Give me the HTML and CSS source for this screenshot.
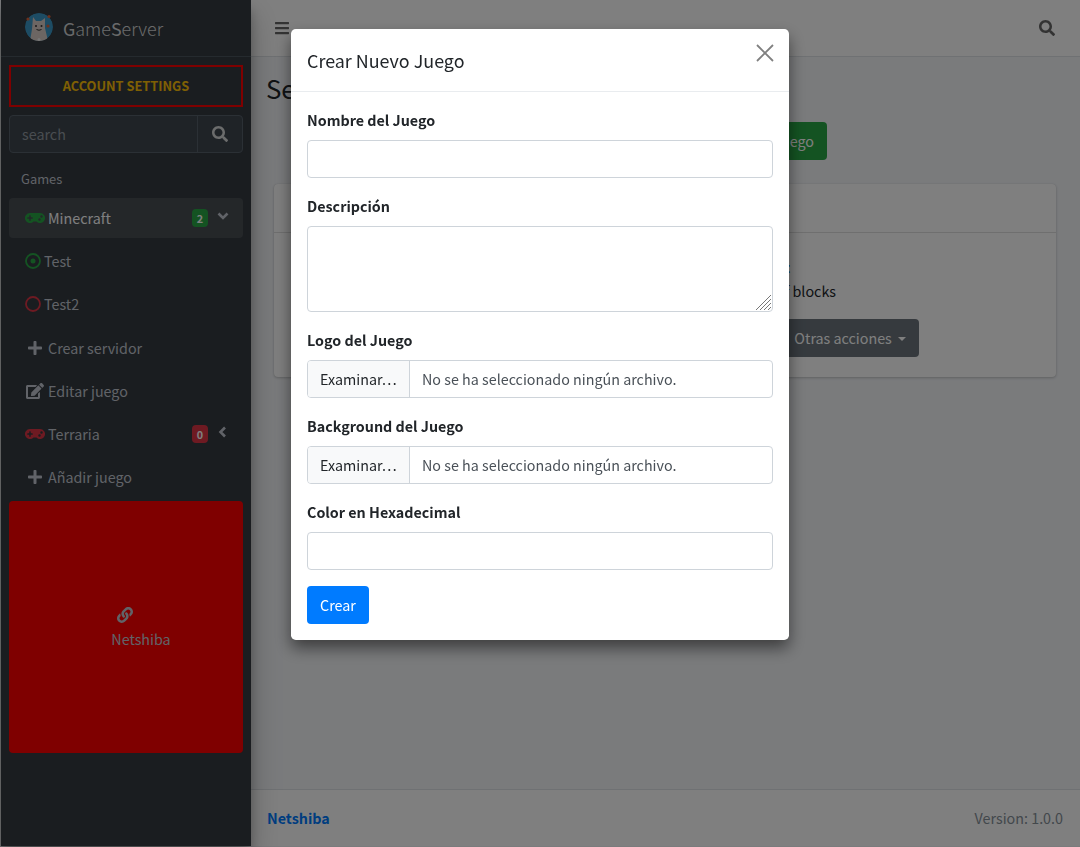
FILE: index.html
```html
<!DOCTYPE html>
<html lang="es">
<head>
    <meta charset="UTF-8">
    <title>GameServer</title>
    <link rel="stylesheet" href="styles.css">
</head>
<body>
    <svg class="sprite" xmlns="http://www.w3.org/2000/svg">
        <symbol id="i-gamepad" viewBox="0 0 640 512"><path d="M480.07 96H160a160 160 0 1 0 114.24 272h91.52A160 160 0 1 0 480.07 96zM248 268a12 12 0 0 1-12 12h-52v52a12 12 0 0 1-12 12h-24a12 12 0 0 1-12-12v-52H84a12 12 0 0 1-12-12v-24a12 12 0 0 1 12-12h52v-52a12 12 0 0 1 12-12h24a12 12 0 0 1 12 12v52h52a12 12 0 0 1 12 12zm216 76a40 40 0 1 1 40-40 40 40 0 0 1-40 40zm64-96a40 40 0 1 1 40-40 40 40 0 0 1-40 40z"/></symbol>
        <symbol id="i-search" viewBox="0 0 512 512"><path d="M505 442.7L405.3 343c-4.5-4.5-10.6-7-17-7H372c27.6-35.3 44-79.7 44-128C416 93.1 322.9 0 208 0S0 93.1 0 208s93.1 208 208 208c48.3 0 92.7-16.4 128-44v16.3c0 6.4 2.5 12.5 7 17l99.7 99.7c9.4 9.4 24.6 9.4 33.9 0l28.3-28.3c9.4-9.4 9.4-24.6.1-34zM208 336c-70.7 0-128-57.2-128-128 0-70.7 57.2-128 128-128 70.7 0 128 57.2 128 128 0 70.7-57.2 128-128 128z"/></symbol>
        <symbol id="i-plus" viewBox="0 0 448 512"><path d="M416 208H272V64c0-17.67-14.33-32-32-32h-32c-17.67 0-32 14.33-32 32v144H32c-17.67 0-32 14.33-32 32v32c0 17.67 14.33 32 32 32h144v144c0 17.67 14.33 32 32 32h32c17.67 0 32-14.33 32-32V304h144c17.67 0 32-14.33 32-32v-32c0-17.67-14.33-32-32-32z"/></symbol>
        <symbol id="i-edit" viewBox="0 0 576 512"><path d="M402.6 83.2l90.2 90.2c3.8 3.8 3.8 10 0 13.8L274.4 405.6l-92.8 10.3c-12.4 1.4-22.9-9.1-21.5-21.5l10.3-92.8L388.8 83.2c3.8-3.8 10-3.8 13.8 0zm162-22.9l-48.8-48.8c-15.2-15.2-39.9-15.2-55.2 0l-35.4 35.4c-3.8 3.8-3.8 10 0 13.8l90.2 90.2c3.8 3.8 10 3.8 13.8 0l35.4-35.4c15.2-15.3 15.2-40 0-55.2zM384 346.2V448H64V128h229.8c3.2 0 6.2-1.3 8.5-3.5l40-40c7.6-7.6 2.2-20.5-8.5-20.5H48C21.5 64 0 85.5 0 112v352c0 26.5 21.5 48 48 48h352c26.5 0 48-21.5 48-48V306.2c0-10.7-12.9-16-20.5-8.5l-40 40c-2.2 2.3-3.5 5.3-3.5 8.5z"/></symbol>
        <symbol id="i-link" viewBox="0 0 512 512"><path d="M326.612 185.391c59.747 59.809 58.927 155.698.36 214.59-.11.12-.24.25-.36.37l-67.2 67.2c-59.27 59.27-155.699 59.262-214.96 0-59.27-59.26-59.27-155.7 0-214.96l37.106-37.106c9.84-9.84 26.786-3.3 27.294 10.606.648 17.722 3.826 35.527 9.69 52.721 1.986 5.822.567 12.262-3.783 16.612l-13.087 13.087c-28.026 28.026-28.905 73.66-1.155 101.96 28.024 28.579 74.086 28.749 102.325.51l67.2-67.19c28.191-28.191 28.073-73.757 0-101.83-3.701-3.694-7.429-6.564-10.341-8.569a16.037 16.037 0 0 1-6.947-12.606c-.396-10.567 3.348-21.456 11.698-29.806l21.054-21.055c5.521-5.521 14.182-6.199 20.584-1.731a152.482 152.482 0 0 1 20.522 17.197zM467.547 44.449c-59.261-59.262-155.69-59.27-214.96 0l-67.2 67.2c-.12.12-.25.25-.36.37-58.566 58.892-59.387 154.781.36 214.59a152.454 152.454 0 0 0 20.521 17.196c6.402 4.468 15.064 3.789 20.584-1.731l21.054-21.055c8.35-8.35 12.094-19.239 11.698-29.806a16.037 16.037 0 0 0-6.947-12.606c-2.912-2.005-6.64-4.875-10.341-8.569-28.073-28.073-28.191-73.639 0-101.83l67.2-67.19c28.239-28.239 74.3-28.069 102.325.51 27.75 28.3 26.872 73.934-1.155 101.96l-13.087 13.087c-4.35 4.35-5.769 10.79-3.783 16.612 5.864 17.194 9.042 34.999 9.69 52.721.509 13.906 17.454 20.446 27.294 10.606l37.106-37.106c59.271-59.259 59.271-155.699.001-214.959z"/></symbol>
        <symbol id="i-bars" viewBox="0 0 448 512"><path d="M16 132h416c8.837 0 16-7.163 16-16V76c0-8.837-7.163-16-16-16H16C7.163 60 0 67.163 0 76v40c0 8.837 7.163 16 16 16zm0 160h416c8.837 0 16-7.163 16-16v-40c0-8.837-7.163-16-16-16H16c-8.837 0-16 7.163-16 16v40c0 8.837 7.163 16 16 16zm0 160h416c8.837 0 16-7.163 16-16v-40c0-8.837-7.163-16-16-16H16c-8.837 0-16 7.163-16 16v40c0 8.837 7.163 16 16 16z"/></symbol>
    </svg>

    <div class="wrapper">
        <aside class="sidebar">
            <a class="brand" href="#">
                <svg class="brand-logo" viewBox="0 0 28 28">
                    <clipPath id="logo-clip"><circle cx="14" cy="14" r="14"/></clipPath>
                    <g clip-path="url(#logo-clip)">
                        <circle cx="14" cy="14" r="14" fill="#3a98c8"/>
                        <path d="M8 4l3 4h5l4-3 0 10 3 13H5l2-12z" fill="#d8ccc6"/>
                        <circle cx="11" cy="13" r="1" fill="#333"/>
                        <circle cx="16.500" cy="13" r="1" fill="#333"/>
                        <path d="M11.500 16.500q2.500 1.500 5 0" stroke="#333" fill="none"/>
                    </g>
                    <circle cx="3" cy="6" r="1.600" fill="#d8623a"/>
                    <circle cx="24" cy="3.500" r="1.600" fill="#d8623a"/>
                    <circle cx="23" cy="13" r="1.600" fill="#d8623a"/>
                    <circle cx="14" cy="26.500" r="1.500" fill="#eee"/>
                </svg>
                <span class="brand-text"><b>G</b>ame<b>S</b>erver</span>
            </a>

            <a class="account" href="#">ACCOUNT SETTINGS</a>

            <div class="side-search">
                <span class="side-search-input">search</span>
                <span class="side-search-btn"><svg class="ico"><use href="#i-search"/></svg></span>
            </div>

            <div class="nav-header">Games</div>
            <ul class="nav-list">
                <li class="nav-item active">
                    <svg class="ico-pad green"><use href="#i-gamepad"/></svg>
                    <span>Minecraft</span>
                    <span class="badge bg-green">2</span>
                    <svg class="chev" viewBox="0 0 12 12"><path d="M1.500 3.500L6 8l4.500-4.500"/></svg>
                </li>
                <li class="nav-item sub">
                    <svg class="ring green" viewBox="0 0 16 16"><circle cx="8" cy="8" r="7"/><circle class="dot" cx="8" cy="8" r="2.500"/></svg>
                    <span>Test</span>
                </li>
                <li class="nav-item sub">
                    <svg class="ring red" viewBox="0 0 16 16"><circle cx="8" cy="8" r="7"/></svg>
                    <span>Test2</span>
                </li>
                <li class="nav-item">
                    <svg class="ico-slot"><use href="#i-plus"/></svg>
                    <span>Crear servidor</span>
                </li>
                <li class="nav-item">
                    <svg class="ico-slot"><use href="#i-edit"/></svg>
                    <span>Editar juego</span>
                </li>
                <li class="nav-item">
                    <svg class="ico-pad red"><use href="#i-gamepad"/></svg>
                    <span>Terraria</span>
                    <span class="badge bg-red">0</span>
                    <svg class="chev" viewBox="0 0 12 12"><path d="M8 1.500L3.500 6 8 10.500"/></svg>
                </li>
                <li class="nav-item">
                    <svg class="ico-slot"><use href="#i-plus"/></svg>
                    <span>Añadir juego</span>
                </li>
            </ul>

            <a class="promo" href="#">
                <svg class="promo-icon"><use href="#i-link"/></svg>
                <span class="promo-text">Netshiba</span>
            </a>
        </aside>

        <div class="main">
            <nav class="topbar">
                <svg class="top-ico"><use href="#i-bars"/></svg>
                <svg class="top-ico"><use href="#i-search"/></svg>
            </nav>

            <section class="content">
                <h1 class="page-title">Servidores</h1>
                <div class="actions">
                    <a class="btn btn-green" href="#">Crear nuevo juego</a>
                </div>
                <div class="card">
                    <div class="card-header"></div>
                    <div class="card-body">
                        <a class="card-link" href="#">Minecraft</a>
                        <p class="card-text">A sandbox game made up of blocks</p>
                        <div class="card-actions">
                            <a class="btn btn-grey" href="#">Otras acciones <i class="caret"></i></a>
                        </div>
                    </div>
                </div>
            </section>

            <footer class="footer">
                <a class="footer-link" href="#">Netshiba</a>
                <span class="footer-version">Version: 1.0.0</span>
            </footer>
        </div>
    </div>

    <div class="backdrop"></div>

    <div class="modal">
        <div class="modal-header">
            <h4 class="modal-title">Crear Nuevo Juego</h4>
            <svg class="modal-close" viewBox="0 0 18 18"><path d="M1 1l16 16M17 1L1 17"/></svg>
        </div>
        <form class="modal-body">
            <div class="field">
                <label for="nombre">Nombre del Juego</label>
                <input class="control" id="nombre" type="text">
            </div>
            <div class="field">
                <label for="descripcion">Descripción</label>
                <div class="area-box">
                    <textarea class="control area" id="descripcion"></textarea>
                    <svg class="grip" viewBox="0 0 15 15"><path d="M0 15L15 0M4 15L15 4M8 15l7-7M12 15l3-3"/></svg>
                </div>
            </div>
            <div class="field">
                <label>Logo del Juego</label>
                <div class="file"><span class="file-btn">Examinar…</span><span class="file-name">No se ha seleccionado ningún archivo.</span></div>
            </div>
            <div class="field">
                <label>Background del Juego</label>
                <div class="file"><span class="file-btn">Examinar…</span><span class="file-name">No se ha seleccionado ningún archivo.</span></div>
            </div>
            <div class="field">
                <label for="color">Color en Hexadecimal</label>
                <input class="control" id="color" type="text">
            </div>
            <button class="btn btn-blue" type="button">Crear</button>
        </form>
    </div>
</body>
</html>
```

FILE: styles.css
```css
* {
    box-sizing: border-box;
}
html {
    background-color: #f4f6f9;
}
body {
    margin: 0;
    height: 847px;
    overflow: hidden;
    font-family: "Noto Sans CJK SC", "Noto Sans", sans-serif;
    font-size: 14.32px;
    line-height: 24px;
    color: #212529;
    padding: 0 0 1px 1px;
}
a {
    text-decoration: none;
}
.sprite {
    display: none;
}
.wrapper {
    display: flex;
    height: 100%;
}

/* sidebar */
.sidebar {
    width: 250px;
    flex: none;
    padding: 0 8px;
    background-color: #343a40;
    color: #c2c7d0;
    box-shadow: 0 14px 28px rgba(0,0,0,0.25), 0 10px 10px rgba(0,0,0,0.22);
    position: relative;
    z-index: 2;
}
.brand {
    display: flex;
    align-items: center;
    height: 57px;
    margin: 0 -8px;
    padding-left: 24px;
    border-bottom: 1px solid #4b545c;
    color: rgba(255,255,255,0.8);
}
.brand-logo {
    width: 28px;
    height: 28px;
    margin: -2px 10px 0 0;
}
.brand-text {
    font-size: 17.9px;
    font-weight: 300;
}
.brand-text b {
    font-weight: 400;
}
.account {
    display: block;
    height: 42px;
    margin-top: 8px;
    border: 2px solid #ff0000;
    color: #ffc107;
    font-weight: 700;
    font-size: 12.8px;
    line-height: 38px;
    text-align: center;
}
.side-search {
    display: flex;
    height: 38px;
    margin-top: 8px;
    background-color: #3f474e;
    border: 1px solid #56606a;
    border-radius: 4px;
}
.side-search-input {
    flex: 1;
    padding: 6px 12px;
    color: #939ba2;
}
.side-search-btn {
    display: flex;
    width: 45px;
    align-items: center;
    justify-content: center;
    border-left: 1px solid #56606a;
}
.ico {
    width: 16px;
    height: 16px;
    fill: #d6d8d9;
}
.nav-header {
    margin-top: 14px;
    padding-left: 12px;
    font-size: 12.9px;
}
.nav-list {
    list-style: none;
    margin: 7px 0 0;
    padding: 0;
}
.nav-item {
    display: flex;
    align-items: center;
    height: 40px;
    margin-bottom: 3.2px;
    padding: 0 14px 0 16px;
    border-radius: 4px;
}
.nav-item.active {
    background-color: rgba(255,255,255,0.1);
    color: #fff;
}
.ico-pad {
    width: 20px;
    height: 16px;
    margin-right: 3px;
}
.ico-pad.green {
    fill: #28a745;
}
.ico-pad.red {
    fill: #dc3545;
}
.ico-slot {
    width: 20px;
    height: 16px;
    margin-right: 3px;
    fill: #c2c7d0;
}
.ring {
    width: 16px;
    height: 16px;
    margin-right: 3px;
    fill: none;
    stroke-width: 1.800;
}
.ring.green {
    stroke: #28a745;
}
.ring.red {
    stroke: #dc3545;
}
.ring .dot {
    fill: #28a745;
    stroke: none;
}
.badge {
    width: 16px;
    height: 18px;
    margin-left: auto;
    border-radius: 4px;
    color: #fff;
    font-size: 10.8px;
    font-weight: 700;
    line-height: 18px;
    text-align: center;
}
.bg-green {
    background-color: #28a745;
}
.bg-red {
    background-color: #dc3545;
}
.chev {
    width: 12px;
    height: 12px;
    margin-left: 9px;
    margin-top: -4px;
    fill: none;
    stroke: #c2c7d0;
    stroke-width: 2.600;
}
.promo {
    display: flex;
    flex-direction: column;
    align-items: center;
    height: 252px;
    margin-top: 4px;
    padding: 106px 0 0 30px;
    border-radius: 4px;
    background-color: #ff0000;
    color: #c2c7d0;
}
.promo-icon {
    width: 16px;
    height: 16px;
    margin-left: -32px;
    fill: #c2c7d0;
}
.promo-text {
    margin-top: 4px;
}

/* main column */
.main {
    flex: 1;
    display: flex;
    flex-direction: column;
    min-width: 0;
}
.topbar {
    display: flex;
    align-items: center;
    justify-content: space-between;
    height: 57px;
    padding: 0 25px 0 23px;
    background-color: #fff;
    border-bottom: 1px solid #dee2e6;
}
.top-ico {
    width: 16px;
    height: 16px;
    fill: rgba(0,0,0,0.6);
}
.content {
    flex: 1;
    padding: 0 24px 0 23px;
}
.page-title {
    margin: 13px 0 2px -8px;
    font-size: 25.8px;
    font-weight: 400;
    line-height: 36px;
}
.actions {
    display: flex;
    justify-content: flex-end;
    margin: 16px 229px 0 0;
}
.btn {
    display: inline-block;
    height: 38px;
    padding: 0 12px;
    border: 1px solid transparent;
    border-radius: 4px;
    font-family: inherit;
    font-size: 14.32px;
    line-height: 36px;
    color: #fff;
}
.btn-green {
    background-color: #28a745;
}
.btn-grey {
    background-color: #6c757d;
}
.btn-blue {
    background-color: #007bff;
}
.card {
    margin-top: 24px;
    height: 193px;
    background-color: #fff;
    border-radius: 4px;
    box-shadow: 0 0 1px rgba(0,0,0,0.125), 0 1px 3px rgba(0,0,0,0.2);
}
.card-header {
    height: 49px;
    padding: 12px 20px;
    border-bottom: 1px solid rgba(0,0,0,0.125);
}
.card-body {
    display: flex;
    flex-direction: column;
    align-items: flex-end;
    padding-top: 22px;
}
.card-link {
    margin-right: 266px;
    color: #007bff;
    font-weight: 700;
}
.card-text {
    margin: 0 220px 0 0;
}
.card-actions {
    display: flex;
    gap: 4px;
    margin: 16px 137px 0 0;
}
.card-actions .btn {
    padding-left: 60px;
}
.caret {
    display: inline-block;
    margin-left: 3px;
    border-top: 4.800px solid;
    border-left: 4.800px solid transparent;
    border-right: 4.800px solid transparent;
    vertical-align: 3.500px;
}
.footer {
    display: flex;
    align-items: center;
    justify-content: space-between;
    height: 57px;
    padding: 0 17px 0 16px;
    background-color: #fff;
    border-top: 1px solid #dee2e6;
    color: #869099;
}
.footer-link {
    color: #007bff;
    font-weight: 700;
}

/* modal */
.backdrop {
    position: fixed;
    inset: 0;
    z-index: 10;
    background-color: rgba(0,0,0,0.5);
}
.modal {
    position: fixed;
    top: 29px;
    left: 291px;
    z-index: 11;
    width: 498px;
    background-color: #fff;
    border-radius: 4.800px;
    box-shadow: 0 8px 16px rgba(0,0,0,0.5);
}
.modal-header {
    display: flex;
    align-items: center;
    justify-content: space-between;
    height: 63px;
    padding: 0 16px;
    border-bottom: 1px solid #e9ecef;
}
.modal-title {
    margin: 0;
    font-size: 17.9px;
    font-weight: 400;
    line-height: 30px;
}
.modal-close {
    width: 18px;
    height: 18px;
    margin: -14px -1px 0 0;
    fill: none;
    stroke: #808080;
    stroke-width: 1.800;
}
.modal-body {
    padding: 16px;
}
.field {
    margin-bottom: 16px;
}
.field label {
    display: block;
    margin-bottom: 8px;
    font-weight: 700;
}
.control {
    display: block;
    width: 100%;
    height: 38px;
    padding: 6px 12px;
    background-color: #fff;
    border: 1px solid #ced4da;
    border-radius: 4px;
    font: inherit;
    color: #495057;
}
.area-box {
    position: relative;
}
.area {
    height: 86px;
    resize: none;
}
.grip {
    position: absolute;
    right: 2px;
    bottom: 2px;
    width: 15px;
    height: 15px;
    fill: none;
    stroke: #777;
}
.file {
    display: flex;
    height: 38px;
    border: 1px solid #ced4da;
    border-radius: 4px;
    color: #495057;
    line-height: 36px;
}
.file-btn {
    width: 102px;
    padding-left: 12px;
    background-color: #f8f9fa;
    border-right: 1px solid #ced4da;
    color: #212529;
    border-radius: 3px 0 0 3px;
}
.file-name {
    padding-left: 12px;
}
```
